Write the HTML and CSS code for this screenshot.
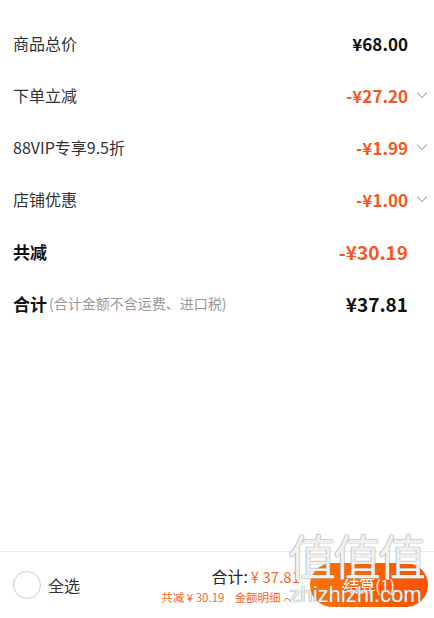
FILE: index.html
```html
<!DOCTYPE html>
<html lang="zh-CN">
<head>
    <meta charset="UTF-8">
    <meta name="viewport" content="width=device-width, initial-scale=1.0">
    <title>金额明细</title>
    <link rel="stylesheet" href="styles.css">
</head>
<body>
    <div class="page">
        <div class="detail">
            <div class="row">
                <span class="label">商品总价</span>
                <span class="value">¥68.00</span>
                <span class="arrow"></span>
            </div>
            <div class="row">
                <span class="label">下单立减</span>
                <span class="value orange">-¥27.20</span>
                <span class="arrow"><svg width="12" height="8" viewBox="0 0 12 8"><path d="M1 1.5l5 5 5-5" fill="none" stroke="#b5b5b5" stroke-width="1.2"/></svg></span>
            </div>
            <div class="row">
                <span class="label">88VIP专享9.5折</span>
                <span class="value orange">-¥1.99</span>
                <span class="arrow"><svg width="12" height="8" viewBox="0 0 12 8"><path d="M1 1.5l5 5 5-5" fill="none" stroke="#b5b5b5" stroke-width="1.2"/></svg></span>
            </div>
            <div class="row">
                <span class="label">店铺优惠</span>
                <span class="value orange">-¥1.00</span>
                <span class="arrow"><svg width="12" height="8" viewBox="0 0 12 8"><path d="M1 1.5l5 5 5-5" fill="none" stroke="#b5b5b5" stroke-width="1.2"/></svg></span>
            </div>
            <div class="row">
                <span class="label strong">共减</span>
                <span class="value orange big">-¥30.19</span>
                <span class="arrow"></span>
            </div>
            <div class="row">
                <span class="label strong">合计<small class="note">(合计金额不含运费、进口税)</small></span>
                <span class="value big">¥37.81</span>
                <span class="arrow"></span>
            </div>
        </div>

        <div class="footer">
            <div class="select-all">
                <span class="radio"></span>
                <span>全选</span>
            </div>
            <div class="summary">
                <div class="total">合计:<span class="total-price">¥ 37.81</span></div>
                <div class="sub">共减 ¥ 30.19<span class="detail-link">金额明细 <svg width="8" height="6" viewBox="0 0 8 6"><path d="M1 5l3-3 3 3" fill="none" stroke="#f5692a" stroke-width="1"/></svg></span></div>
            </div>
            <button class="checkout">结算(1)</button>
        </div>

        <div class="watermark">
            <div class="wm-big">值值值</div>
            <div class="wm-small">zhizhizhi.com</div>
        </div>
    </div>
</body>
</html>
```

FILE: styles.css
```css
* {
    box-sizing: border-box;
}
body {
    margin: 0;
    background: #fff;
    font-family: "Noto Sans CJK SC", "Noto Sans", sans-serif;
    color: #333;
}
.page {
    position: relative;
    width: 434px;
    height: 618px;
    display: flex;
    flex-direction: column;
    overflow: hidden;
}
.detail {
    flex: 1;
    padding-top: 17px;
}
.row {
    height: 52px;
    display: flex;
    align-items: center;
    padding-left: 13px;
}
.label {
    flex: 1;
    font-size: 16px;
    color: #333;
    display: flex;
    align-items: center;
}
.label.strong {
    font-weight: bold;
    font-size: 17px;
    color: #111;
}
.note {
    font-size: 14px;
    font-weight: normal;
    color: #999;
    margin-left: 2px;
}
.value {
    font-size: 17px;
    font-weight: bold;
    color: #111;
}
.value.big {
    font-size: 19px;
}
.orange {
    color: #f8561c;
}
.arrow {
    width: 26px;
    display: flex;
    justify-content: flex-end;
    padding-right: 6px;
}
.footer {
    height: 67px;
    border-top: 1px solid #ececec;
    display: flex;
    align-items: center;
    padding: 0 6px 0 13px;
}
.select-all {
    display: flex;
    align-items: center;
    gap: 7px;
    font-size: 16px;
    color: #333;
    flex: 1;
}
.radio {
    width: 28px;
    height: 28px;
    border-radius: 50%;
    border: 1.5px solid #ccc;
}
.summary {
    display: flex;
    flex-direction: column;
    align-items: flex-end;
    margin-right: 10px;
}
.total {
    font-size: 16px;
    color: #222;
    line-height: 22px;
}
.total-price {
    font-size: 15px;
    color: #f5692a;
    margin-left: 3px;
}
.sub {
    font-size: 11.5px;
    color: #f5692a;
    line-height: 16px;
    margin-top: 1px;
    margin-right: 9px;
}
.detail-link {
    margin-left: 10px;
}
.checkout {
    width: 118px;
    height: 44px;
    border: none;
    border-radius: 22px;
    background: linear-gradient(90deg, #ff7300, #ff5000);
    color: #fff;
    font-family: inherit;
    font-size: 16px;
}
.watermark {
    position: absolute;
    left: 283px;
    top: 526px;
    width: 145px;
    text-align: center;
    color: rgba(255, 255, 255, 0.9);
    text-shadow: 0 0 1px #888, 0 0 1px #888;
    pointer-events: none;
}
.wm-big {
    font-size: 48px;
    line-height: 56px;
    letter-spacing: -3px;
}
.wm-small {
    font-family: "Liberation Sans", sans-serif;
    font-size: 22px;
    line-height: 26px;
}
```
